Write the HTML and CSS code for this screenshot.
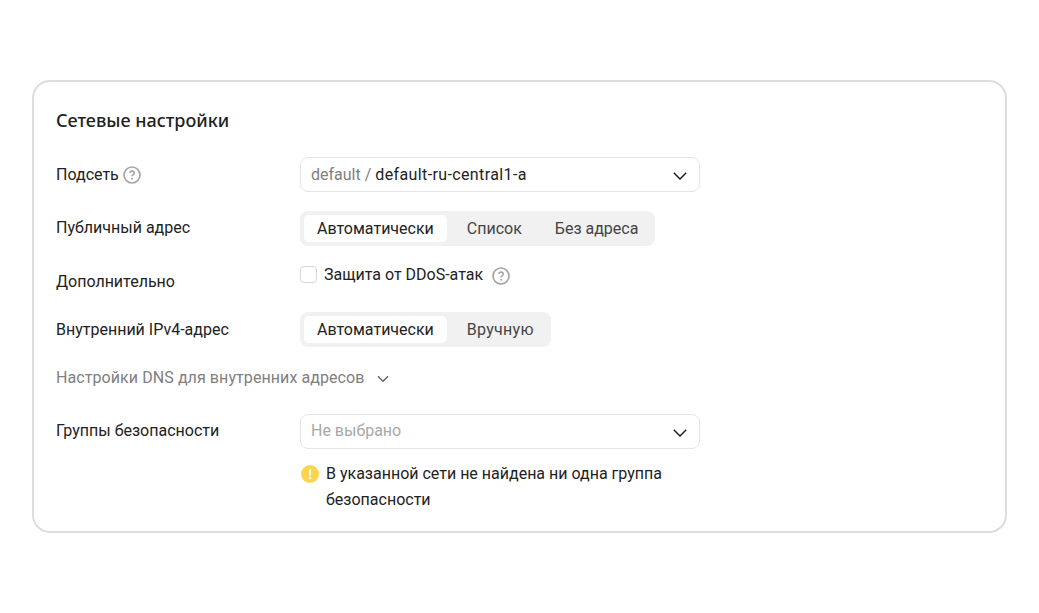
FILE: index.html
```html
<!DOCTYPE html>
<html lang="ru">
<head>
<meta charset="utf-8">
<title>Сетевые настройки</title>
<link rel="stylesheet" href="styles.css">
</head>
<body>
<main class="card">
  <h2 class="title">Сетевые настройки</h2>
  <div class="row row-subnet">
    <div class="label label-subnet">Подсеть <svg class="help" viewBox="0 0 18 18"><circle cx="9" cy="9" r="8" fill="none" stroke="#a6a6a6" stroke-width="1.7"/><path d="M6.9 7.1c0-1.2 1-2 2.2-2s2.1.8 2.1 1.9c0 1.6-2.1 1.7-2.1 3.3" fill="none" stroke="#a6a6a6" stroke-width="1.6"/><circle cx="9.1" cy="12.8" r="1.05" fill="#a6a6a6"/></svg></div>
    <div class="select"><span><span class="muted">default / </span><span class="value">default-ru-central1-a</span></span><svg class="chev" viewBox="0 0 14 8"><path d="M.8.8 7 7l6.200-6.200" fill="none" stroke="#222" stroke-width="1.5"/></svg></div>
  </div>
  <div class="row row-public">
    <div class="label label-up">Публичный адрес</div>
    <div class="seg"><span class="opt on">Автоматически</span><span class="opt">Список</span><span class="opt">Без адреса</span></div>
  </div>
  <div class="row row-extra">
    <div class="label label-extra">Дополнительно</div>
    <div class="check"><span class="box"></span><span>Защита от DDoS-атак</span><svg class="help" viewBox="0 0 18 18"><circle cx="9" cy="9" r="8" fill="none" stroke="#a6a6a6" stroke-width="1.7"/><path d="M6.9 7.1c0-1.2 1-2 2.2-2s2.1.8 2.1 1.9c0 1.6-2.1 1.7-2.1 3.3" fill="none" stroke="#a6a6a6" stroke-width="1.6"/><circle cx="9.1" cy="12.8" r="1.05" fill="#a6a6a6"/></svg></div>
  </div>
  <div class="row row-ip">
    <div class="label">Внутренний IPv4-адрес</div>
    <div class="seg"><span class="opt on">Автоматически</span><span class="opt opt-wide">Вручную</span></div>
  </div>
  <div class="dns"><span class="dns-text">Настройки DNS для внутренних адресов</span><svg class="chev-small" viewBox="0 0 12 8"><path d="M1 1.200 6 6.200l5-5" fill="none" stroke="#666" stroke-width="1.5"/></svg></div>
  <div class="row row-groups">
    <div class="label label-up">Группы безопасности</div>
    <div class="select"><span class="placeholder">Не выбрано</span><svg class="chev" viewBox="0 0 14 8"><path d="M.8.8 7 7l6.200-6.200" fill="none" stroke="#222" stroke-width="1.5"/></svg></div>
  </div>
  <div class="warn">
    <svg class="warn-icon" viewBox="0 0 18 18"><circle cx="9" cy="9" r="9" fill="#fcd54e"/><rect x="8" y="4" width="2" height="6.500" rx="1" fill="#fff"/><circle cx="9" cy="13" r="1.200" fill="#fff"/></svg>
    <p class="warn-text">В указанной сети не найдена ни одна группа безопасности</p>
  </div>
</main>
</body>
</html>
```

FILE: styles.css
```css
* { box-sizing: border-box; }
html, body { margin: 0; background: #fff; }
body {
  padding: 80px 32px 0;
  font-family: Roboto, "Noto Sans", sans-serif;
  font-size: 16px;
  color: #222;
}
.card {
  width: 975px;
  height: 453px;
  border: 2px solid #ddd;
  border-radius: 18px;
  padding: 25px 22px 0;
}
.title { margin: 0 0 24px; font-family: "Noto Sans", sans-serif; font-size: 18px; line-height: 26px; font-weight: 500; }
.row { display: flex; align-items: center; }
.label { width: 244px; flex: none; display: flex; align-items: center; gap: 4px; }
.label-up { padding-bottom: 2px; }
.select {
  width: 400px; height: 35px; padding: 0 10px;
  display: flex; align-items: center; justify-content: space-between;
  border: 1px solid #e5e5e5; border-radius: 8px;
}
.muted { color: #808080; }
.value { letter-spacing: .38px; }
.placeholder { color: #a8a8a8; padding-bottom: 2px; }
.chev { width: 14px; height: 8px; margin: 2px 2px 0 0; }
.chev-small { width: 12px; height: 8px; margin: 2px 0 0 13px; }
.help { width: 18px; height: 18px; flex: none; }
.row-public { margin-top: 19px; }
.seg { display: flex; height: 35px; padding: 4px; background: #f1f1f1; border-radius: 8px; }
.opt { padding: 0 13px; line-height: 27px; color: #444; display: block; margin-right: 7px; }
.opt:last-child { margin-right: 0; }
.opt-wide { letter-spacing: .28px; }
.opt.on { background: #fff; border-radius: 5px; color: #222; }
.row-extra { margin-top: 18px; align-items: flex-start; height: 48px; }
.label-extra { padding-top: 8px; }
.check { display: flex; align-items: center; height: 20px; gap: 7px; }
.box { width: 17px; height: 17px; border: 1px solid #d6d6d6; border-radius: 4px; }
.check .help { margin-left: 2px; margin-top: 4px; }
.dns { margin-top: 19px; color: #808080; display: flex; align-items: center; line-height: 24px; }
.dns-text { letter-spacing: .08px; }
.row-groups { margin-top: 24px; }
.warn { margin-left: 244px; margin-top: 12px; width: 400px; display: flex; align-items: flex-start; gap: 7px; padding-left: 1px; }
.warn-icon { width: 18px; height: 18px; flex: none; margin-top: 4px; }
.warn-text { margin: 0; line-height: 26px; }
```
